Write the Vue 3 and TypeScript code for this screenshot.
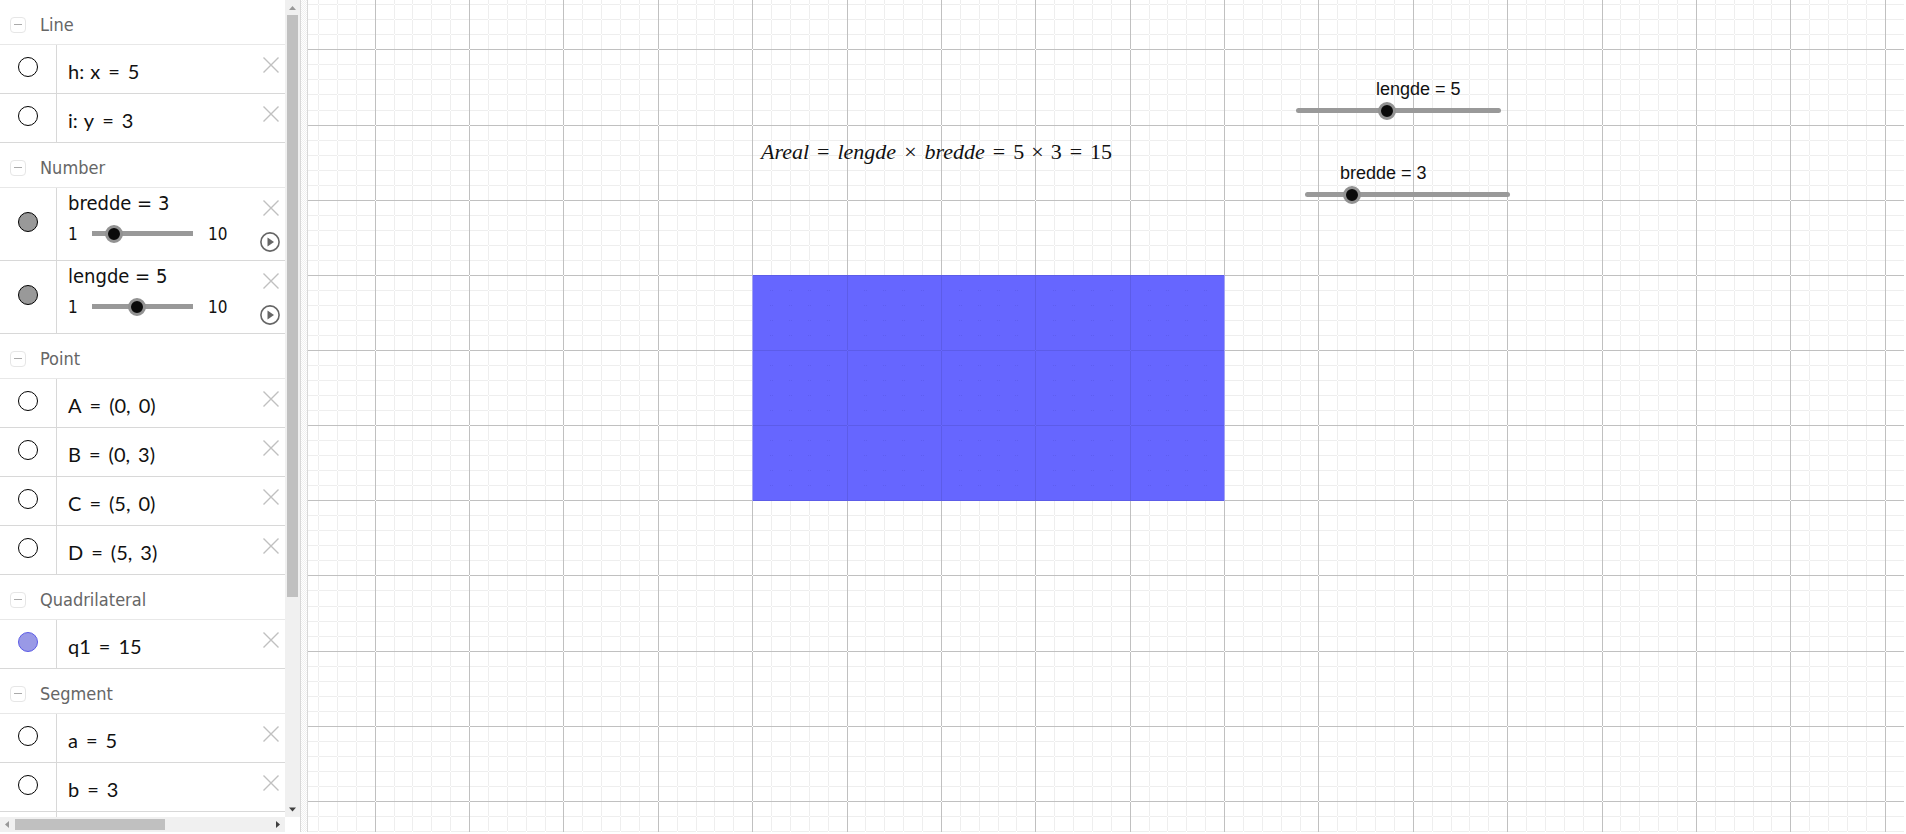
<script setup lang="ts">
import { ref } from 'vue'

interface Item { name: string; parts: string[]; fill?: 'poly' }
interface Group { title: string; items: Item[] }
interface SliderVar { name: string; value: number; shown: boolean }

const sliders = ref<SliderVar[]>([
  { name: 'bredde', value: 3, shown: true },
  { name: 'lengde', value: 5, shown: true },
])
const groups: Group[] = [
  { title: 'Line', items: [{ name: 'h', parts: ['h:', 'x', '=', '5'] }, { name: 'i', parts: ['i:', 'y', '=', '3'] }] },
  { title: 'Number', items: [] },
  {
    title: 'Point',
    items: [
      { name: 'A', parts: ['A', '=', '(0,', '0)'] },
      { name: 'B', parts: ['B', '=', '(0,', '3)'] },
      { name: 'C', parts: ['C', '=', '(5,', '0)'] },
      { name: 'D', parts: ['D', '=', '(5,', '3)'] },
    ],
  },
  { title: 'Quadrilateral', items: [{ name: 'q1', parts: ['q1', '=', '15'], fill: 'poly' }] },
  { title: 'Segment', items: [{ name: 'a', parts: ['a', '=', '5'] }, { name: 'b', parts: ['b', '=', '3'] }, { name: 'c', parts: [] }] },
]

// World-to-screen mapping of the graphics view
const unitX = 94.38
const unitY = 75.15
const originX = 444.65
const originY = 500.8
const sx = (x: number) => Math.floor(originX + x * unitX)
const sy = (y: number) => Math.floor(originY - y * unitY)
const range = (a: number, b: number) => Array.from({ length: b - a + 1 }, (_, i) => a + i)
const cols = range(-25, 130)
const rows = range(-60, 34)
const isMajor = (n: number) => n % 5 === 0
const colPath = (major: boolean) => cols.filter(n => isMajor(n) === major).map(n => `M${sx(n / 5)} 0h1v2000h-1z`).join('')
const rowPath = (major: boolean) => rows.filter(n => isMajor(n) === major).map(n => `M0 ${sy(n / 5)}v1h3000v-1z`).join('')
const minorPath = colPath(false) + rowPath(false)
const majorPath = colPath(true) + rowPath(true)

const rect = { x: sx(0) + 1, y: sy(3), w: sx(5) - sx(0) - 1, h: sy(0) - sy(3) + 1 }
const innerGrid = [1, 2, 3, 4].map(n => `M${sx(n)} ${rect.y}h1v${rect.h}h-1z`).join('') +
  [1, 2].map(n => `M${rect.x} ${sy(n)}v1h${rect.w}v-1z`).join('')
const innerDots = range(1, 24).filter(n => !isMajor(n)).flatMap(i =>
  range(1, 14).filter(n => !isMajor(n)).map(j => `M${sx(i / 5) - 1} ${sy(j / 5)}h1v1h-1zM${sx(i / 5) + 1} ${sy(j / 5)}h1v1h-1z`)).join('')
</script>

<template>
  <div class="app">
    <aside class="algebra">
      <div class="list">
        <section v-for="g in groups" :key="g.title">
          <header class="head">
            <button class="fold" :aria-label="'Collapse ' + g.title"></button>
            <h2>{{ g.title }}</h2>
          </header>
          <template v-if="g.title === 'Number'">
            <div v-for="s in sliders" :key="s.name" class="row tall">
              <div class="marble"><input v-model="s.shown" type="checkbox" class="dot num" :aria-label="'Show ' + s.name"></div>
              <div class="body">
                <label class="label" :for="'alg-' + s.name">{{ s.name }} = {{ s.value }}</label>
                <div class="scale">
                  <span class="min">1</span>
                  <span class="slide"><input :id="'alg-' + s.name" v-model.number="s.value" type="range" min="1" max="10"></span>
                  <span class="max">10</span>
                </div>
              </div>
              <div class="tools">
                <button class="close" :aria-label="'Delete ' + s.name"><svg width="16" height="16" viewBox="0 0 16 16"><path d="M0.5 0.5l15 15M15.5 0.5l-15 15" /></svg></button>
                <button class="play" :aria-label="'Play ' + s.name"><svg width="20" height="20" viewBox="0 0 20 20"><circle cx="10" cy="10" r="9.1" /><path d="M7.5 5.5v9l6.5-4.5z" /></svg></button>
              </div>
            </div>
          </template>
          <div v-for="it in g.items" :key="it.name" class="row">
            <div class="marble"><input type="checkbox" class="dot" :class="it.fill" :checked="!!it.fill" :aria-label="'Show ' + it.name"></div>
            <div class="body math"><span v-for="(p, i) in it.parts" :key="i" :class="{ eq: p === '=', tag: p.endsWith(':'), comma: p.endsWith(',') }">{{ p }}</span></div>
            <div class="tools">
              <button class="close" :aria-label="'Delete ' + it.name"><svg width="16" height="16" viewBox="0 0 16 16"><path d="M0.5 0.5l15 15M15.5 0.5l-15 15" /></svg></button>
            </div>
          </div>
        </section>
      </div>
      <div class="vbar">
        <svg class="arrow off" width="15" height="15" viewBox="0 0 15 15"><path d="M4 10h7L7.500 6z" /></svg>
        <div class="track"><div class="thumb"></div></div>
        <svg class="arrow" width="15" height="15" viewBox="0 0 15 15"><path d="M4 5.500h7L7.500 9.500z" /></svg>
      </div>
      <div class="hbar">
        <svg class="arrow off" width="15" height="15" viewBox="0 0 15 15"><path d="M9 4v7L5 7.500z" /></svg>
        <div class="track"><div class="thumb"></div></div>
        <svg class="arrow" width="15" height="15" viewBox="0 0 15 15"><path d="M6 4v7l4-3.500z" /></svg>
      </div>
    </aside>
    <div class="splitter"></div>
    <main class="graphics">
      <svg class="grid" width="100%" height="100%" shape-rendering="crispEdges">
        <path :d="minorPath" fill="#eeeeee" />
        <path :d="majorPath" fill="#c0c0c0" />
        <rect :x="rect.x" :y="rect.y" :width="rect.w" :height="rect.h" fill="#6666ff" />
        <rect :x="rect.x + rect.w" :y="rect.y" width="1" :height="rect.h" fill="#a3a3f0" />
        <rect :x="rect.x - 1" :y="rect.y" width="1" :height="rect.h" fill="#a3a3f0" />
        <path :d="innerGrid" fill="#5c5ce8" />
        <path :d="innerDots" fill="#5d5df0" />
        <path :d="`M${rect.x} ${rect.y}h${rect.w}v1h-${rect.w}zM${rect.x} ${rect.y + rect.h - 1}h${rect.w}v1h-${rect.w}z`" fill="#5c5ce8" />
      </svg>
      <div class="formula">
        <i>Areal</i><span class="eq">=</span><i>lengde</i><span class="eq">×</span><i>bredde</i><span class="eq">=</span><span>{{ sliders[1].value }}</span><span class="times">×</span><span>{{ sliders[0].value }}</span><span class="eq">=</span><span>{{ sliders[0].value * sliders[1].value }}</span>
      </div>
      <div v-for="s in sliders" :key="s.name" class="float" :class="s.name">
        <label :for="'view-' + s.name">{{ s.name }} = {{ s.value }}</label>
        <span class="slide round"><input :id="'view-' + s.name" v-model.number="s.value" type="range" min="1" max="10"></span>
      </div>
    </main>
  </div>
</template>

<style>
body { margin: 0; overflow: hidden; background: #fff; }
</style>

<style scoped>
.app { display: flex; height: 100vh; box-sizing: border-box; padding: 0 2px 2px 0; font-family: "DejaVu Sans Condensed", "DejaVu Sans", sans-serif; color: #111; }
.algebra { display: grid; grid-template: minmax(0, 1fr) 15px / 285px 15px; flex: none; }
.list { overflow: hidden; }
.head { display: flex; align-items: center; height: 45px; border-bottom: 1px solid #e8e8e8; padding: 5px 0 0 10px; box-sizing: border-box; }
.fold { width: 16px; height: 16px; padding: 0; border: 1px solid #e6e6e6; border-radius: 4px; background: #fff; display: flex; align-items: center; justify-content: center; }
.fold::before { content: ""; width: 8px; height: 1px; background: #aaa; }
h2 { margin: 0 0 0 14px; font-size: 18px; line-height: 20px; font-weight: 400; color: #666; }
.row { display: flex; height: 49px; box-sizing: border-box; border-bottom: 1px solid #d8d8d8; }
.tall { height: 73px; }
.marble { width: 57px; box-sizing: border-box; border-right: 1px solid #d8d8d8; padding: 12px 0 0 18px; }
.tall .marble { padding-top: 24px; }
.dot { appearance: none; display: block; width: 20px; height: 20px; margin: 0; border: 1px solid #000; border-radius: 50%; background: #fff; }
.num { background: #999; }
.poly { background: #9999e6; border-color: #5c5ce6; }
.body { flex: 1; padding-left: 11px; }
.math { display: flex; font-family: Lato, sans-serif; font-size: 20px; line-height: 52px; }
.tag { margin-right: 6px; }
.comma { margin-right: 8px; }
.eq { margin: 0 8px; }
.times { margin: 0 7px; }
.label { display: block; font-size: 20px; line-height: 22px; padding-top: 4px; }
.scale { display: flex; align-items: center; font-size: 17px; line-height: 20px; height: 20px; margin-top: 10px; }
.min { width: 15px; }
.slide { position: relative; display: block; width: 119px; height: 18px; }
.max { margin-left: 6px; }
.slide::before { content: ""; position: absolute; left: 9px; right: 9px; top: 6px; height: 5px; background: #999; }
.round::before { left: 7px; right: 7px; border-radius: 3px; }
input[type="range"] { appearance: none; position: relative; display: block; width: 100%; height: 18px; margin: 0; background: none; }
input[type="range"]::-webkit-slider-thumb { appearance: none; box-sizing: border-box; width: 18px; height: 18px; border: 3px solid #929292; border-radius: 50%; background: #0a0a0a; }
.tools { width: 25px; display: flex; flex-direction: column; align-items: flex-start; }
.close, .play { display: block; padding: 0; border: 0; background: none; }
.close { width: 16px; height: 16px; margin: 12px 0 0 3px; }
.play { width: 20px; height: 20px; margin-top: 16px; }
.tools svg { display: block; }
.close path { stroke: #c0c0c0; stroke-width: 1.400; fill: none; }
.play circle { fill: none; stroke: #666; stroke-width: 1.600; }
.play path { fill: #666; }
.vbar, .hbar { display: flex; background: #f0f0f0; }
.vbar { flex-direction: column; }
.track { flex: 1; display: flex; }
.vbar .track { padding: 0 2px; }
.hbar .track { padding: 2px 0; }
.thumb { background: #c0c0c0; }
.vbar .thumb { width: 100%; height: 74%; }
.hbar .thumb { width: 59%; }
.arrow { flex: none; fill: #404040; }
.off { fill: #999; }
.splitter { flex: none; width: 8px; box-sizing: border-box; border: solid #d8d8d8; border-width: 0 1px; background: conic-gradient(#f0f0f0 25%, #fff 0 50%, #f0f0f0 0 75%, #fff 0) 0 0 / 2px 2px; }
.graphics { position: relative; flex: 1; overflow: hidden; }
.grid { display: block; }
.formula { position: absolute; left: 453px; top: 138px; display: flex; font-family: "Liberation Serif", serif; font-size: 22px; line-height: 28px; }
.float { position: absolute; font-family: "Liberation Sans", sans-serif; font-size: 18px; line-height: 22px; width: 219px; }
.float label { display: block; margin-bottom: 2px; }
.float .slide { width: 219px; }
.lengde { left: 981px; top: 78px; }
.lengde label { margin-left: 87px; }
.bredde { left: 990px; top: 162px; }
.bredde label { margin-left: 42px; }
</style>
